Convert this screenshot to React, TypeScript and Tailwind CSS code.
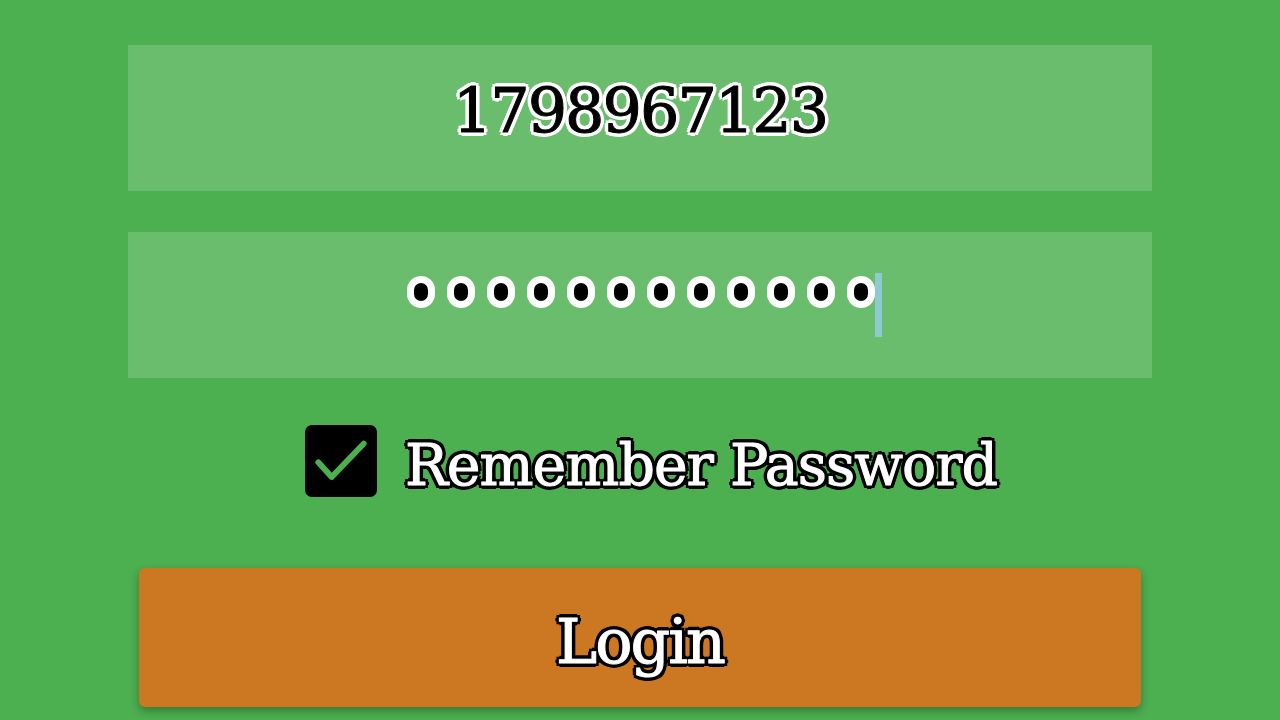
import React from "react";

const whiteOutline =
  "[text-shadow:-3px_-3px_0_#fff,3px_-3px_0_#fff,-3px_3px_0_#fff,3px_3px_0_#fff,0_-4px_0_#fff,0_4px_0_#fff,-4px_0_0_#fff,4px_0_0_#fff]";
const blackOutline =
  "[text-shadow:-3px_-3px_0_#000,3px_-3px_0_#000,-3px_3px_0_#000,3px_3px_0_#000,0_-4px_0_#000,0_4px_0_#000,-4px_0_0_#000,4px_0_0_#000]";

export default function App() {
  const dots = Array.from({ length: 12 });
  return (
    <div
      className="w-full h-[720px] overflow-hidden bg-[#4caf50] flex flex-col items-center pt-[45px]"
      style={{ fontFamily: '"DejaVu Serif", "Liberation Serif", serif' }}
    >
      {/* phone number */}
      <div className="w-[1024px] h-[146px] bg-[#6abd6d] flex items-center justify-center">
        <span className={`-mt-[14px] text-[62px] leading-none tracking-[-2px] text-black [-webkit-text-stroke:1px_#000] ${whiteOutline}`}>
          1798967123
        </span>
      </div>

      {/* password */}
      <div className="mt-[41px] w-[1024px] h-[146px] bg-[#6abd6d] flex items-center justify-center pl-[8px]">
        <div className="flex items-center gap-[12px] -mt-[26px]">
          {dots.map((_, i) => (
            <span key={i} className="w-[28px] h-[32px] rounded-full bg-black border-[7px] border-white" />
          ))}
        </div>
        <div className="w-[7px] h-[64px] bg-[#8ecbd0]" />
      </div>

      {/* remember */}
      <label className="mt-[47px] flex items-center gap-[28px] ml-[22px]">
        <span className="w-[72px] h-[72px] rounded-[7px] bg-black flex items-center justify-center">
          <svg viewBox="0 0 24 24" className="w-[64px] h-[64px]" fill="none" stroke="#4caf50" strokeWidth="2.2" strokeLinecap="round" strokeLinejoin="round">
            <path d="M3.5 12.5l5 5.5L20.5 5.5" />
          </svg>
        </span>
        <span className={`mt-[8px] text-[57px] leading-none tracking-[-1px] text-white [-webkit-text-stroke:1px_#fff] ${blackOutline}`}>
          Remember Password
        </span>
      </label>

      {/* login */}
      <button className="mt-[71px] w-[1002px] h-[139px] rounded-[6px] bg-[#cc7722] shadow-[0_4px_8px_rgba(0,0,0,0.3)] flex items-center justify-center">
        <span className={`mt-[8px] text-[62px] leading-none tracking-[-2px] text-white [-webkit-text-stroke:1px_#fff] ${blackOutline}`}>
          Login
        </span>
      </button>
    </div>
  );
}
